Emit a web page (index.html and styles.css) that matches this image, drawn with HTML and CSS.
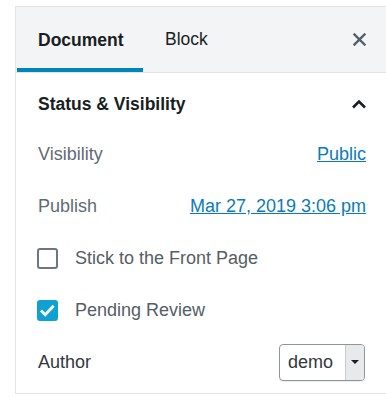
FILE: index.html
```html
<!DOCTYPE html>
<html lang="en">
<head>
  <meta charset="UTF-8" />
  <meta name="viewport" content="width=device-width, initial-scale=1.0" />
  <title>Document settings</title>
  <link rel="stylesheet" href="styles.css">
</head>
<body>
  <div class="sidebar">
    <!-- Tabs -->
    <div class="sidebar-header">
      <div class="tab active">Document</div>
      <div class="tab">Block</div>
      <button class="close" aria-label="Close settings">
        <svg width="13" height="13" viewBox="0 0 13 13"><path d="M1.5 1.5l10 10M11.5 1.5l-10 10" stroke="#555d66" stroke-width="2.4" stroke-linecap="square"/></svg>
      </button>
    </div>

    <!-- Status & Visibility panel -->
    <div class="panel">
      <div class="panel-title">
        <span>Status &amp; Visibility</span>
        <svg class="chevron" width="16" height="10" viewBox="0 0 16 10"><path d="M2 8.5l6-6 6 6" fill="none" stroke="#191e23" stroke-width="2.6"/></svg>
      </div>
      <div class="row">
        <span class="label">Visibility</span>
        <a class="link" href="#">Public</a>
      </div>
      <div class="row">
        <span class="label">Publish</span>
        <a class="link" href="#">Mar 27, 2019 3:06 pm</a>
      </div>
      <div class="row">
        <label class="check"><span class="box"></span>Stick to the Front Page</label>
      </div>
      <div class="row">
        <label class="check"><span class="box checked">
          <svg width="21" height="21" viewBox="0 0 21 21"><path d="M4 10.5l4.2 4.2 8.5-9" fill="none" stroke="#fff" stroke-width="2.8"/></svg>
        </span>Pending Review</label>
      </div>
      <div class="row">
        <span class="label author">Author</span>
        <div class="select">
          <span class="select-value">demo</span>
          <span class="select-arrow"></span>
        </div>
      </div>
    </div>
  </div>
</body>
</html>
```

FILE: styles.css
```css
* {
  box-sizing: border-box;
}
body {
  margin: 0;
  background: #fff;
  font-family: 'Liberation Sans', Arial, sans-serif;
  font-size: 18px;
  color: #191e23;
}
.sidebar {
  margin: 6px 0 0 15px;
  border-top: 1px solid #e2e4e7;
  border-left: 1px solid #e2e4e7;
  border-bottom: 1px solid #e2e4e7;
}
.sidebar-header {
  display: flex;
  align-items: center;
  height: 66px;
  background: #f3f4f5;
  border-bottom: 1px solid #e2e4e7;
  padding-right: 20px;
}
.tab {
  height: 65px;
  display: flex;
  align-items: center;
  padding: 0 21px 0 22px;
  font-size: 17.5px;
  color: #191e23;
}
.tab.active {
  font-weight: bold;
  width: 126px;
  margin-left: 1px;
  padding-left: 21px;
  box-shadow: inset 0 -4px 0 #0085ba;
  padding-top: 1px;
}
.close {
  margin-left: auto;
  border: none;
  background: none;
  padding: 0;
  width: 13px;
  height: 13px;
  display: flex;
}
.panel {
  padding: 13px 20px 13px 22px;
}
.panel-title {
  display: flex;
  align-items: center;
  justify-content: space-between;
  height: 36px;
  margin-bottom: 14px;
  font-weight: bold;
  font-size: 17.5px;
}
.chevron {
  margin-right: -1px;
}
.row {
  display: flex;
  align-items: center;
  justify-content: space-between;
  height: 36px;
  margin-bottom: 16px;
}
.row:last-child {
  margin-bottom: 0;
}
.label {
  color: #626a73;
}
.label.author {
  color: #32373c;
}
.link {
  color: #0a7bba;
  text-decoration: underline;
}
.check {
  display: flex;
  align-items: center;
  color: #555d66;
  margin-left: -1px;
}
.box {
  width: 21px;
  height: 21px;
  border: 2px solid #6c7781;
  border-radius: 3px;
  margin-right: 17px;
  display: flex;
}
.box.checked {
  background: #11a0d2;
  border: none;
}
.select {
  display: flex;
  width: 86px;
  height: 37px;
  margin-right: 1px;
  border: 1px solid #8d96a0;
  border-radius: 4px;
  overflow: hidden;
  box-shadow: 0 1px 1px rgba(0,0,0,0.08);
}
.select-value {
  flex: 1;
  display: flex;
  align-items: center;
  padding-left: 8px;
  color: #32373c;
}
.select-arrow {
  width: 19px;
  background: #e8e9ea;
  border-left: 1px solid #c8cbcf;
  position: relative;
}
.select-arrow::after {
  content: "";
  position: absolute;
  left: 5px;
  top: 15px;
  border-left: 4px solid transparent;
  border-right: 4px solid transparent;
  border-top: 4px solid #191e23;
}
```
